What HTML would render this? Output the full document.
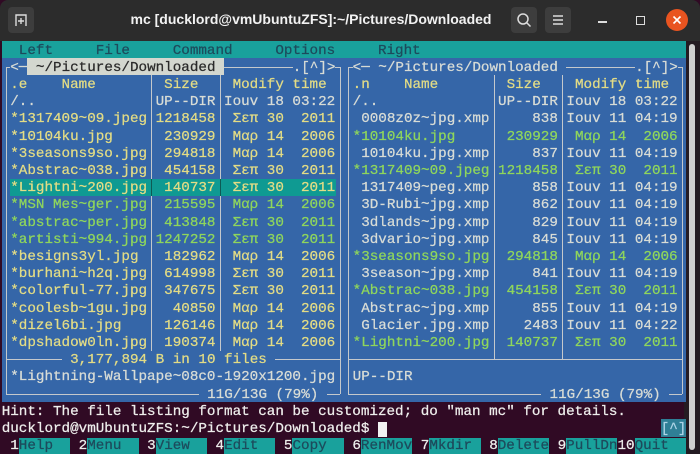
<!DOCTYPE html>
<html><head><meta charset="utf-8"><style>
*{margin:0;padding:0;box-sizing:border-box}
body{width:700px;height:454px;overflow:hidden;background:#300a24;position:relative;font-family:"Liberation Mono","DejaVu Sans Mono",monospace}
#tb{position:absolute;left:0;top:0;width:700px;height:41px;background:#2c2c2c;border-radius:8px 8px 0 0}
#title{position:absolute;left:0;width:622px;top:11px;text-align:center;color:#f2f2f2;font:bold 14px "Liberation Sans","DejaVu Sans",sans-serif}
.btn{position:absolute;top:7px;width:26px;height:26px;background:#3d3d3d;border-radius:4px}
#t{position:absolute;left:1.7px;top:41px;width:685px;height:413px;overflow:hidden}
.s{position:absolute;white-space:pre;font-size:14.26px;line-height:17.2px;height:17.2px;color:#d8dcd6;padding-top:1.5px;-webkit-text-stroke:0.25px currentColor}
.W{color:#d8dcd6}.Y{color:#e3dc85}.G{color:#8fd65c}
.bl{background:#3566a8}
.hl{position:absolute;height:1px;background:#c4c8cc}
.vl{position:absolute;width:1px;background:#c4c8cc}
.fk{color:#1d4b5c;background:#19a19c}
</style></head><body>
<div id="tb">
 <div class="btn" style="left:8px">
  <svg width="26" height="26" viewBox="0 0 26 26"><path d="M8 19V8h10v11" fill="none" stroke="#ddd" stroke-width="1.4"/><path d="M13 11v6M10 14h6" stroke="#ddd" stroke-width="1.4"/></svg>
 </div>
 <div id="title">mc [ducklord@vmUbuntuZFS]:~/Pictures/Downloaded</div>
 <div class="btn" style="left:511px"><svg width="26" height="26"><circle cx="12" cy="12" r="5" fill="none" stroke="#ddd" stroke-width="1.5"/><path d="M15.5 15.5l4 4" stroke="#ddd" stroke-width="1.5"/></svg></div>
 <div class="btn" style="left:545px"><svg width="26" height="26"><path d="M8 9h10M8 13h10M8 17h10" stroke="#ddd" stroke-width="1.4"/></svg></div>
 <div style="position:absolute;left:598px;top:21px;width:9px;height:2px;background:#ddd"></div>
 <div style="position:absolute;left:636px;top:16px;width:9px;height:9px;border:1.5px solid #ddd"></div>
 <div style="position:absolute;left:666px;top:9px;width:22px;height:22px;border-radius:50%;background:#e95420"></div>
 <svg style="position:absolute;left:666px;top:9px" width="22" height="22"><path d="M7.5 7.5l7 7M14.5 7.5l-7 7" stroke="#fff" stroke-width="1.6"/></svg>
</div>
<div style="position:absolute;left:684px;top:41px;width:16px;height:413px;background:#241b22"></div>
<div style="position:absolute;left:689px;top:44px;width:6px;height:406px;background:#cfcfcf;border-radius:3px"></div>
<div id="t">
 <div style="position:absolute;left:0;top:0;width:684px;height:17.2px;background:#19a19c"></div>
 <div class="s" style="left:17.12px;top:0;color:#1d4b5c">Left     File     Command     Options     Right</div>
 <div style="position:absolute;left:0;top:17.2px;width:684.8px;height:344px;background:#3566a8"></div>
 <div class="hl" style="left:4.3px;top:25.8px;width:334px"></div>
 <div class="hl" style="left:4.3px;top:352.6px;width:334px"></div>
 <div class="hl" style="left:4.3px;top:318.2px;width:334px"></div>
 <div class="vl" style="left:4.3px;top:25.8px;height:327px"></div>
 <div class="vl" style="left:338.3px;top:25.8px;height:327px"></div>
 <div class="vl" style="left:149.8px;top:25.8px;height:292.4px"></div>
 <div class="vl" style="left:218.3px;top:25.8px;height:292.4px"></div>
 <div class="hl" style="left:346.7px;top:25.8px;width:334px"></div>
 <div class="hl" style="left:346.7px;top:352.6px;width:334px"></div>
 <div class="hl" style="left:346.7px;top:318.2px;width:334px"></div>
 <div class="vl" style="left:346.7px;top:25.8px;height:327px"></div>
 <div class="vl" style="left:680.7px;top:25.8px;height:327px"></div>
 <div class="vl" style="left:492.2px;top:25.8px;height:292.4px"></div>
 <div class="vl" style="left:560.7px;top:25.8px;height:292.4px"></div>
 <div style="position:absolute;left:8.56px;top:137.6px;width:325.3px;height:17.2px;background:#0f9a92"></div>
 <div class="vl" style="left:149.8px;top:137.6px;height:17.2px;background:#0d5a55"></div>
 <div class="vl" style="left:218.3px;top:137.6px;height:17.2px;background:#0d5a55"></div>
 <div class="s bl" style="left:8.56px;top:17.2px">&lt;─</div>
 <div class="s" style="left:25.68px;top:17.2px;background:#d3d7cf;color:#2a2a2a"> ~/Pictures/Downloaded </div>
 <div class="s bl" style="left:291px;top:17.2px">.[^]&gt;</div>
 <div class="s bl" style="left:350.96px;top:17.2px">&lt;─ ~/Pictures/Downloaded </div>
 <div class="s bl" style="left:633.4px;top:17.2px">.[^]&gt;</div>
 <div class="s Y" style="left:8.56px;top:34.4px">.e    Name        Size    Modify time</div>
 <div class="s W" style="left:8.56px;top:51.6px">/..              UP--DIR Iouv 18 03:22</div>
 <div class="s Y" style="left:8.56px;top:68.8px">*1317409~09.jpeg 1218458  Σεπ 30  2011</div>
 <div class="s Y" style="left:8.56px;top:86px">*10104ku.jpg      230929  Μαρ 14  2006</div>
 <div class="s Y" style="left:8.56px;top:103.2px">*3seasons9so.jpg  294818  Μαρ 14  2006</div>
 <div class="s Y" style="left:8.56px;top:120.4px">*Abstrac~038.jpg  454158  Σεπ 30  2011</div>
 <div class="s Y" style="left:8.56px;top:137.6px">*Lightni~200.jpg  140737  Σεπ 30  2011</div>
 <div class="s G" style="left:8.56px;top:154.8px">*MSN Mes~ger.jpg  215595  Μαρ 14  2006</div>
 <div class="s G" style="left:8.56px;top:172px">*abstrac~per.jpg  413848  Σεπ 30  2011</div>
 <div class="s G" style="left:8.56px;top:189.2px">*artisti~994.jpg 1247252  Σεπ 30  2011</div>
 <div class="s Y" style="left:8.56px;top:206.4px">*besigns3yl.jpg   182962  Μαρ 14  2006</div>
 <div class="s Y" style="left:8.56px;top:223.6px">*burhani~h2q.jpg  614998  Σεπ 30  2011</div>
 <div class="s Y" style="left:8.56px;top:240.8px">*colorful-77.jpg  347675  Σεπ 30  2011</div>
 <div class="s Y" style="left:8.56px;top:258px">*coolesb~1gu.jpg   40850  Μαρ 14  2006</div>
 <div class="s Y" style="left:8.56px;top:275.2px">*dizel6bi.jpg     126146  Μαρ 14  2006</div>
 <div class="s Y" style="left:8.56px;top:292.4px">*dpshadow0ln.jpg  190374  Μαρ 14  2006</div>
 <div class="s Y bl" style="left:59.9px;top:309.6px"> 3,177,894 B in 10 files </div>
 <div class="s W" style="left:8.56px;top:326.8px">*Lightning-Wallpape~08c0-1920x1200.jpg</div>
 <div class="s W bl" style="left:196.9px;top:344px"> 11G/13G (79%) </div>
 <div class="s Y" style="left:350.96px;top:34.4px">.n    Name        Size    Modify time</div>
 <div class="s W" style="left:350.96px;top:51.6px">/..              UP--DIR Iouv 18 03:22</div>
 <div class="s W" style="left:350.96px;top:68.8px"> 0008z0z~jpg.xmp     838 Iouv 11 04:19</div>
 <div class="s G" style="left:350.96px;top:86px">*10104ku.jpg      230929  Μαρ 14  2006</div>
 <div class="s W" style="left:350.96px;top:103.2px"> 10104ku.jpg.xmp     837 Iouv 11 04:19</div>
 <div class="s G" style="left:350.96px;top:120.4px">*1317409~09.jpeg 1218458  Σεπ 30  2011</div>
 <div class="s W" style="left:350.96px;top:137.6px"> 1317409~peg.xmp     858 Iouv 11 04:19</div>
 <div class="s W" style="left:350.96px;top:154.8px"> 3D-Rubi~jpg.xmp     862 Iouv 11 04:19</div>
 <div class="s W" style="left:350.96px;top:172px"> 3dlands~jpg.xmp     829 Iouv 11 04:19</div>
 <div class="s W" style="left:350.96px;top:189.2px"> 3dvario~jpg.xmp     845 Iouv 11 04:19</div>
 <div class="s G" style="left:350.96px;top:206.4px">*3seasons9so.jpg  294818  Μαρ 14  2006</div>
 <div class="s W" style="left:350.96px;top:223.6px"> 3season~jpg.xmp     841 Iouv 11 04:19</div>
 <div class="s G" style="left:350.96px;top:240.8px">*Abstrac~038.jpg  454158  Σεπ 30  2011</div>
 <div class="s W" style="left:350.96px;top:258px"> Abstrac~jpg.xmp     855 Iouv 11 04:19</div>
 <div class="s W" style="left:350.96px;top:275.2px"> Glacier.jpg.xmp    2483 Iouv 11 04:22</div>
 <div class="s G" style="left:350.96px;top:292.4px">*Lightni~200.jpg  140737  Σεπ 30  2011</div>
 <div class="s W" style="left:350.96px;top:326.8px">UP--DIR</div>
 <div class="s W bl" style="left:539.3px;top:344px"> 11G/13G (79%) </div>
 <div class="s W" style="left:0;top:361.2px;color:#eeeeec">Hint: The file listing format can be customized; do "man mc" for details.</div>
 <div class="s W" style="left:0;top:378.4px;color:#eeeeec">ducklord@vmUbuntuZFS:~/Pictures/Downloaded$ </div>
 <div style="position:absolute;left:376.6px;top:380.5px;width:8.56px;height:15px;background:#f2f2f2"></div>
 <div class="s" style="left:659px;top:378.4px;background:#2f7f96;color:#aed4e6">[^]</div>
 <div class="s" style="left:0;top:395.6px;color:#eeeeec"> 1<span class="fk">Help  </span> 2<span class="fk">Menu  </span> 3<span class="fk">View  </span> 4<span class="fk">Edit  </span> 5<span class="fk">Copy  </span> 6<span class="fk">RenMov</span> 7<span class="fk">Mkdir </span> 8<span class="fk">Delete</span> 9<span class="fk">PullDn</span>10<span class="fk">Quit  </span></div>
</div>
</body></html>
